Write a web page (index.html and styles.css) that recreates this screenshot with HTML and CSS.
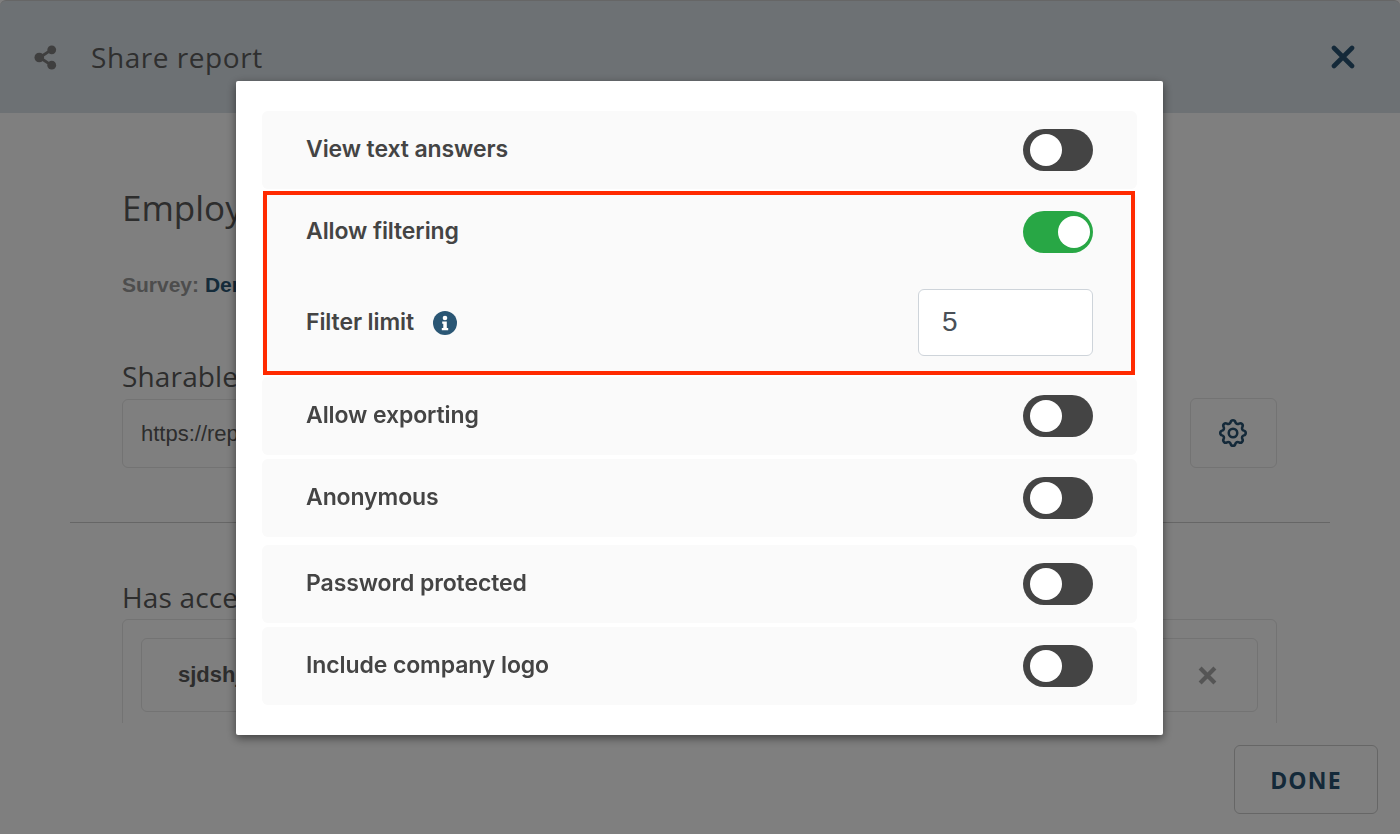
FILE: index.html
```html
<!DOCTYPE html>
<html lang="en">
<head>
<meta charset="utf-8">
<title>Share report</title>
<link rel="stylesheet" href="styles.css">
</head>
<body>
<div class="dialog">
  <header class="dialog-head">
    <svg class="share-icon" viewBox="0 0 24 26" aria-hidden="true">
      <path class="share-lines" d="M6 13 L18 5 M6 13 L18 21"/>
      <circle cx="5.5" cy="13" r="5"/>
      <circle cx="18.5" cy="5" r="4.6"/>
      <circle cx="18.5" cy="21" r="4.6"/>
    </svg>
    <h1 class="dialog-title">Share report</h1>
    <svg class="close-icon" viewBox="0 0 24 24" aria-hidden="true"><path d="M3 3 L21 21 M21 3 L3 21"/></svg>
  </header>
  <main class="dialog-body">
    <div class="section">
      <h2 class="report-name">Employee</h2>
      <p class="survey-line"><b>Survey:</b> <a class="survey-link">Demo</a></p>
      <h3 class="section-title sharable">Sharable</h3>
      <div class="link-row">
        <div class="link-box">https://reports</div>
        <button class="gear-btn" type="button" aria-label="Settings">
          <svg class="gear-icon" viewBox="0 0 24 24" aria-hidden="true">
            <path d="M10.325 4.317c.426-1.756 2.924-1.756 3.35 0a1.724 1.724 0 002.573 1.066c1.543-.94 3.31.826 2.37 2.37a1.724 1.724 0 001.065 2.572c1.756.426 1.756 2.924 0 3.35a1.724 1.724 0 00-1.066 2.573c.94 1.543-.826 3.31-2.37 2.37a1.724 1.724 0 00-2.572 1.065c-.426 1.756-2.924 1.756-3.35 0a1.724 1.724 0 00-2.573-1.066c-1.543.94-3.31-.826-2.37-2.37a1.724 1.724 0 00-1.065-2.572c-1.756-.426-1.756-2.924 0-3.35a1.724 1.724 0 001.066-2.573c-.94-1.543.826-3.31 2.37-2.37.996.608 2.296.07 2.572-1.065z"/>
            <circle cx="12" cy="12" r="3"/>
          </svg>
        </button>
      </div>
    </div>
    <hr class="divider">
    <div class="section">
      <h3 class="section-title access">Has access</h3>
      <div class="access-box">
        <div class="access-row">
          <span class="access-name">sjdshjd</span>
          <svg class="remove-icon" viewBox="0 0 18 18" aria-hidden="true"><path d="M2 2 L16 16 M16 2 L2 16"/></svg>
        </div>
      </div>
    </div>
  </main>
  <footer class="dialog-foot">
    <button class="done-btn" type="button">DONE</button>
  </footer>
</div>

<div class="overlay">
  <div class="modal">
    <div class="opt">
      <span class="opt-label">View text answers</span>
      <span class="toggle"><span class="knob"></span></span>
    </div>
    <div class="opt opt-tall">
      <div class="opt-line first-line">
        <span class="opt-label">Allow filtering</span>
        <span class="toggle on"><span class="knob"></span></span>
      </div>
      <div class="opt-line limit-line">
        <span class="opt-label limit-label">Filter limit</span>
        <svg class="info-icon" viewBox="0 0 24 24" aria-hidden="true">
          <circle class="info-bg" cx="12" cy="12" r="12"/>
          <circle class="info-fg" cx="12" cy="7" r="2.3"/>
          <path class="info-fg" d="M9.2 10.6h4.6v6.4h1.4v2.2H8.8V17h1.5v-4.2H9.2z"/>
        </svg>
        <input class="limit-input" type="text" value="5" aria-label="Filter limit">
      </div>
      <div class="highlight"></div>
    </div>
    <div class="opt">
      <span class="opt-label">Allow exporting</span>
      <span class="toggle"><span class="knob"></span></span>
    </div>
    <div class="opt">
      <span class="opt-label">Anonymous</span>
      <span class="toggle"><span class="knob"></span></span>
    </div>
    <div class="opt opt-gap">
      <span class="opt-label">Password protected</span>
      <span class="toggle"><span class="knob"></span></span>
    </div>
    <div class="opt">
      <span class="opt-label">Include company logo</span>
      <span class="toggle"><span class="knob"></span></span>
    </div>
  </div>
</div>
</body>
</html>
```
FILE: styles.css
```css
* { box-sizing: border-box; }
html, body { margin: 0; height: 834px; overflow: hidden; }
body { background: #fff; font-family: "Open Sans", "Noto Sans", sans-serif; color: #555; }

.dialog { height: 834px; display: flex; flex-direction: column; background: #fff; }

.dialog-head {
  height: 113px;
  flex: none;
  display: flex;
  align-items: center;
  padding: 0 45px 0 34px;
  background: #dbe2e8;
  border-top: 1px solid #ccc;
  border-radius: 6px 6px 0 0;
}
.share-icon { width: 23px; height: 25px; fill: #7e7e7e; flex: none; }
.share-lines { stroke: #7e7e7e; stroke-width: 3; fill: none; }
.dialog-title { margin: 0 0 0 34px; flex: 1; font-size: 28px; font-weight: 400; line-height: 40px; color: #5e5e5e; letter-spacing: .55px; }
.close-icon { width: 24px; height: 24px; fill: none; stroke: #285373; stroke-width: 4.6; stroke-linecap: round; flex: none; }

.dialog-body { height: 610px; flex: none; overflow: hidden; padding: 0 70px; }
.section { padding: 0 53px 0 52px; }
.report-name { margin: 71px 0 0; font-size: 35px; font-weight: 400; line-height: 48px; color: #5a5a5a; }
.survey-line { margin: 38px 0 0; font: 700 21px/30px "Liberation Sans", sans-serif; color: #9a9a9a; }
.survey-line b { font-weight: 700; }
.survey-link { color: #2a5674; }
.section-title { margin: 0; font-size: 28px; font-weight: 400; line-height: 40px; color: #5a5a5a; letter-spacing: .15px; }
.sharable { margin-top: 56px; }
.link-row { display: flex; margin-top: 2px; gap: 40px; }
.link-box {
  flex: 1;
  height: 69px;
  margin-top: 1px;
  padding: 0 18px;
  display: flex;
  align-items: center;
  border: 1px solid #e6e6e6;
  border-radius: 6px;
  font: 400 22px "Liberation Sans", sans-serif;
  color: #5a5a5a;
}
.gear-btn {
  width: 87px;
  height: 70px;
  flex: none;
  padding: 0 1px 0 0;
  display: flex;
  align-items: center;
  justify-content: center;
  background: none;
  border: 1px solid #e6e6e6;
  border-radius: 6px;
}
.gear-icon { width: 34px; height: 34px; fill: none; stroke: #285373; stroke-width: 1.8; }
.divider { margin: 54px 0 0; border: 0; border-top: 1px solid #ccc; }
.access { margin-top: 54px; }
.access-box { margin-top: 2px; padding: 18px 18px 0; height: 130px; border: 1px solid #e6e6e6; border-radius: 6px; }
.access-row {
  height: 74px;
  padding: 0 40px 0 36px;
  display: flex;
  align-items: center;
  justify-content: space-between;
  border: 1px solid #e6e6e6;
  border-radius: 6px;
}
.access-name { font: 700 22px "Liberation Sans", sans-serif; color: #5a5a5a; }
.remove-icon { width: 19px; height: 19px; fill: none; stroke: #aaa; stroke-width: 4; }

.dialog-foot { flex: 1; display: flex; justify-content: flex-end; align-items: flex-start; padding: 22px 22px 0 0; }
.done-btn {
  width: 144px;
  height: 69px;
  background: none;
  border: 1px solid #ccc;
  border-radius: 6px;
  font: 700 23px "Open Sans", sans-serif;
  letter-spacing: 1.2px;
  color: #285373;
}

.overlay {
  position: fixed;
  inset: 0;
  background: rgba(0, 0, 0, .5);
  padding: 81px 237px 0 236px;
}
.modal {
  height: 654px;
  padding: 30px 26px;
  background: #fff;
  border-radius: 2px;
  box-shadow: 0 3px 10px rgba(0, 0, 0, .5);
  display: flex;
  flex-direction: column;
  gap: 4px;
}
.opt {
  height: 78px;
  flex: none;
  padding: 0 44px;
  display: flex;
  align-items: center;
  justify-content: space-between;
  background: #fafafa;
  border-radius: 6px;
  position: relative;
}
.opt-gap { margin-top: 4px; }
.opt-tall { height: 180px; display: block; }
.opt-line { display: flex; align-items: center; justify-content: space-between; }
.first-line { height: 78px; }
.limit-line { height: 102px; justify-content: flex-start; }
.opt-label { font: 600 23px/30px Inter, sans-serif; color: #444; letter-spacing: -.1px; position: relative; top: -1px; }
.limit-label { top: 0; }

.toggle { width: 70px; height: 42px; flex: none; padding: 5px 7px; background: #444; border-radius: 21px; display: block; }
.toggle.on { background: #28a745; }
.toggle.on .knob { transform: translateX(28px); }
.knob { display: block; width: 32px; height: 32px; background: #fff; border-radius: 50%; }

.info-icon { width: 24px; height: 24px; margin: 2px 0 0 19px; flex: none; }
.info-bg { fill: #2a5674; }
.info-fg { fill: #fff; }
.limit-input {
  width: 175px;
  height: 67px;
  margin-left: auto;
  padding: 0 23px;
  background: #fff;
  border: 1px solid #ced4da;
  border-radius: 6px;
  font: 400 28px "Liberation Sans", sans-serif;
  color: #495057;
}
.highlight { position: absolute; left: 1px; top: -2px; width: 872px; height: 184px; border: 4px solid #ff2a00; pointer-events: none; }
```
